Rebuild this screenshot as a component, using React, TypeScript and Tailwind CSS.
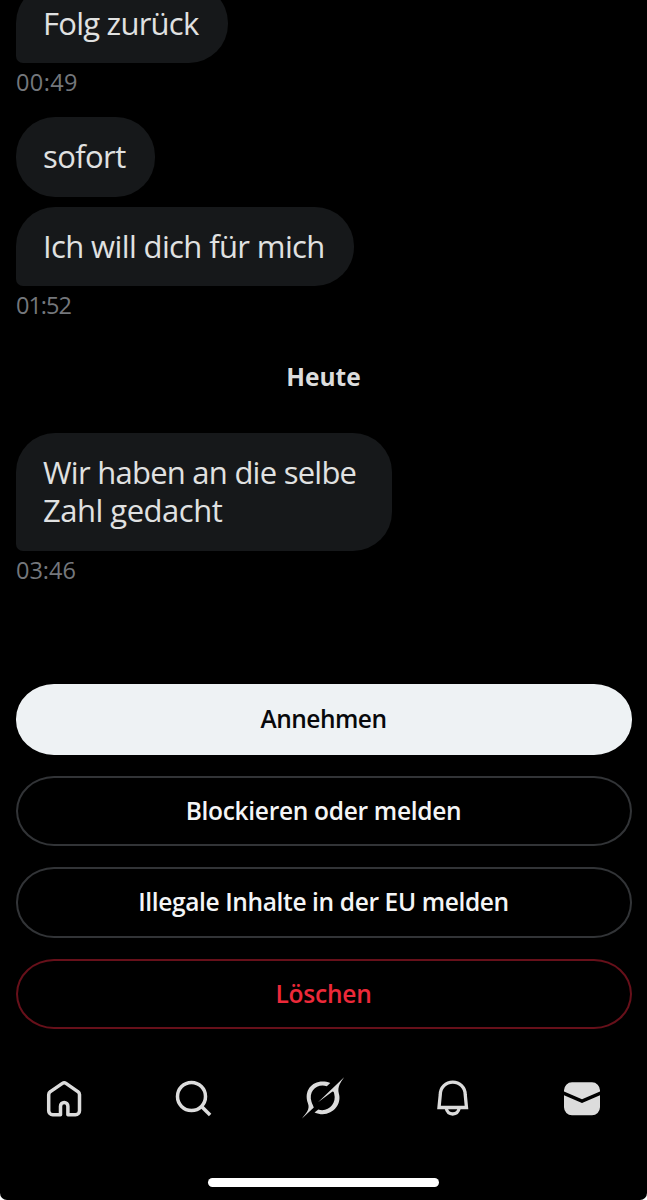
import React from 'react';
import clsx from 'clsx';

interface BubbleProps {
    children: React.ReactNode;
    className?: string;
    tail?: boolean;
}

const Bubble: React.FC<BubbleProps> = ({ children, className, tail = true }) => (
    <div
        className={clsx(
            'bg-[#16181a] px-[27px] py-5 text-[31px] leading-[38px] whitespace-nowrap text-[#e0e1e1]',
            tail ? 'rounded-[39px] rounded-bl-[7px]' : 'rounded-[39px]',
            className,
        )}
    >
        {children}
    </div>
);

const Time: React.FC<{ children: string; className?: string }> = ({ children, className }) => (
    <div className={clsx('mt-1 mb-px h-[30px] text-[23.5px] leading-[30px] text-[#74777c]', className)}>{children}</div>
);

const actions = [
    { label: 'Annehmen', style: 'border-[#eef2f4] bg-[#eef2f4] text-[#08090b] tracking-[-0.5px]' },
    { label: 'Blockieren oder melden', style: 'border-[#323437] text-[#f4f5f6] tracking-[-0.3px]' },
    { label: 'Illegale Inhalte in der EU melden', style: 'border-[#323437] text-[#f4f5f6] tracking-[-0.37px]' },
    { label: 'Löschen', style: 'border-[#67101a] text-[#ed2939] tracking-[-0.2px]' },
];

const HomeIcon = () => (
    <svg width="40" height="40" viewBox="0 0 40 40" fill="none" stroke="#dcdcdc" strokeWidth="3.5" strokeLinejoin="round">
        <path d="M16.5 35.700V27.200a3.700 3.700 0 0 1 7.400 0V35.700H31.500a4 4 0 0 0 4-4V15.600a3.600 3.600 0 0 0-1.700-3L22 4.400a3.200 3.200 0 0 0-3.600 0L6.400 12.600a3.600 3.600 0 0 0-1.700 3V31.700a4 4 0 0 0 4 4Z" />
    </svg>
);

const SearchIcon = () => (
    <svg width="40" height="40" viewBox="0 0 40 40" fill="none" stroke="#dcdcdc" strokeWidth="3.5">
        <circle cx="18.5" cy="17.5" r="14" />
        <path d="m28.300 27.300 8.800 8.800" />
    </svg>
);

const GrokIcon = () => (
    <svg width="44" height="44" viewBox="0 1 44 44" fill="#dcdcdc">
        <path d="M17 26.300 43.100 1.300C39.500 6.500 36.300 11 37.800 17.300C41.700 30 28.500 43 13.500 36.400L17.300 33.500C26.500 36.700 36 28 33.200 17.800C32.800 15.500 32 15 30.500 16.200Z" />
        <path d="M1 42.400C5 37 9.200 33.500 7 27.500C1.500 12.500 14.500 1.500 29.300 7L25.800 10.200C16 7.200 7.200 15 10.500 25.800C11.200 28.200 12.300 29.700 12.800 31.500Z" />
    </svg>
);

const BellIcon = () => (
    <svg width="40" height="40" viewBox="0 0 40 40" fill="none" stroke="#dcdcdc" strokeWidth="3.3">
        <path d="M5 28.500 6.300 15.500a12.450 12.450 0 0 1 24.900 0L32.500 28.500Z" />
        <path d="M12 28.500c1 4.800 3.500 6.500 6.700 6.500s5.700-1.700 6.700-6.500" />
    </svg>
);

const MailIcon = () => (
    <svg width="40" height="40" viewBox="0 0 40 40" fill="#dcdcdc">
        <path d="M2 11.300a8 8 0 0 1 8-8H30a8 8 0 0 1 8 8V12.400L20 20.300 2 12.400Z" />
        <path d="M2 16.200 20 24.100 38 16.200V28.300a8 8 0 0 1-8 8H10a8 8 0 0 1-8-8Z" />
    </svg>
);

export default function App() {
    return (
        <div className="bg-white">
            <main className="flex h-[1200px] w-[647px] flex-col overflow-hidden rounded-b-[7px] bg-black font-['Open_Sans','Noto_Sans',sans-serif]">
                <section className="-mt-4 flex h-[700px] flex-col items-start pl-4">
                    <Bubble className="h-[79px] w-[212px] tracking-[-0.75px]">Folg zurück</Bubble>
                    <Time className="tracking-[0.4px]">00:49</Time>
                    <Bubble tail={false} className="mt-[19px] h-[80px] w-[139px] tracking-[-0.6px]">sofort</Bubble>
                    <Bubble className="mt-[10px] h-[79px] w-[338px] tracking-[-0.62px]">Ich will dich für mich</Bubble>
                    <Time className="tracking-[-1px]">01:52</Time>
                    <h2 className="mt-[41px] h-[30px] w-[615px] text-center text-[24.5px] leading-[30px] font-bold text-[#dcdddd]">Heute</h2>
                    <Bubble className="mt-[41px] h-[118px] w-[376px]">
                        <span className="tracking-[-0.75px]">Wir haben an die selbe</span>
                        <br />
                        <span className="tracking-[-0.5px]">Zahl gedacht</span>
                    </Bubble>
                    <Time>03:46</Time>
                </section>

                <section className="flex flex-col gap-[21px] px-[15.5px]">
                    {actions.map(action => (
                        <button
                            key={action.label}
                            className={clsx('h-[70.5px] rounded-[38px/35px] border-2 text-[24.5px] leading-none font-semibold', action.style)}
                        >
                            {action.label}
                        </button>
                    ))}
                </section>

                <nav className="mt-[48px] flex h-[44px] items-center justify-between pr-[45px] pl-[44px]">
                    <HomeIcon />
                    <SearchIcon />
                    <GrokIcon />
                    <BellIcon />
                    <MailIcon />
                </nav>

                <div className="mt-auto mb-[13.5px] ml-[208px] h-[9px] w-[231px] rounded-full bg-white" />
            </main>
        </div>
    );
}
